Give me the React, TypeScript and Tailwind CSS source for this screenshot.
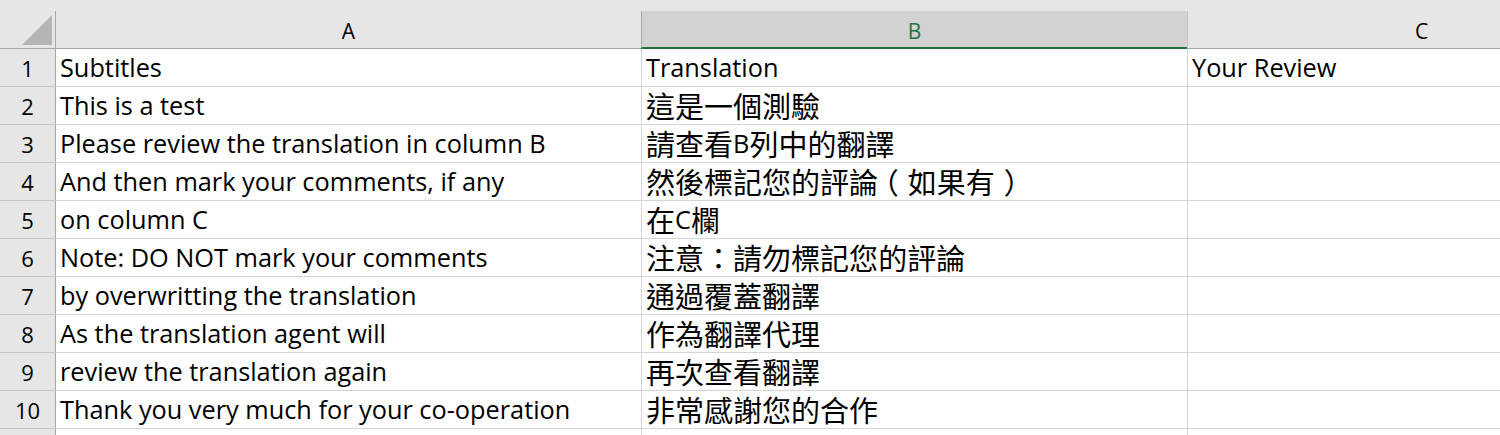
import React from "react";

const rows: [string, string, string][] = [
  ["Subtitles", "Translation", "Your Review"],
  ["This is a test", "這是一個測驗", ""],
  ["Please review the translation in column B", "請查看B列中的翻譯", ""],
  ["And then mark your comments, if any", "然後標記您的評論（如果有）", ""],
  ["on column C", "在C欄", ""],
  ["Note: DO NOT mark your comments", "注意：請勿標記您的評論", ""],
  ["by overwritting the translation", "通過覆蓋翻譯", ""],
  ["As the translation agent will", "作為翻譯代理", ""],
  ["review the translation again", "再次查看翻譯", ""],
  ["Thank you very much for your co-operation", "非常感謝您的合作", ""],
];

function Cjk({ text }: { text: string }) {
  const chars = Array.from(text);
  return (
    <span className="text-[29px] [font-family:'Noto_Sans_CJK_TC','Noto_Sans_CJK_SC',sans-serif]">
      {chars.map((c, i) =>
        c === "（" ? (
          <span key={i} className="pl-[6px] pr-[9px] [font-feature-settings:'halt']">{c}</span>
        ) : c === "）" ? (
          <span key={i} className="pl-[9px] pr-[6px] [font-feature-settings:'halt']">{c}</span>
        ) : (
          <React.Fragment key={i}>{c}</React.Fragment>
        )
      )}
    </span>
  );
}

function Mixed({ text }: { text: string }) {
  const parts = text.split(/([\u3000-\u9fff\uff00-\uffef]+)/).filter((p) => p.length > 0);
  return (
    <>
      {parts.map((p, i) =>
        /[\u3000-\u9fff\uff00-\uffef]/.test(p) ? <Cjk key={i} text={p} /> : <span key={i}>{p}</span>
      )}
    </>
  );
}

export default function App() {
  return (
    <div className="w-[1500px] h-[435px] overflow-hidden bg-white [font-family:'Open_Sans','Noto_Sans_CJK_TC',sans-serif] text-black">
      {/* top strip */}
      <div className="h-[11px] w-[1700px] bg-[#e6e6e6]" />
      {/* column header row */}
      <div className="flex h-[38px] w-[1700px] bg-[#e6e6e6]">
        <div className="flex h-[38px] w-[56px] shrink-0 items-end justify-end border-r border-b border-r-[#a8a8a8] border-b-[#a8a8a8] pr-[3px] pb-[3px]">
          <svg width="30" height="30" viewBox="0 0 30 30">
            <polygon points="0,30 30,30 30,0" fill="#b5b5b5" />
          </svg>
        </div>
        <div className="flex h-[38px] w-[585px] shrink-0 items-center justify-center border-b border-b-[#a8a8a8] pt-[5px] text-[21px]">
          A
        </div>
        <div className="flex h-[38px] w-[546px] shrink-0 items-center justify-center border-l-[1px] border-b-[2px] border-l-[#a8a8a8] border-b-[#1e7145] bg-[#d2d2d2] pt-[6px] text-[21px] text-[#217346]">
          B
        </div>
        <div className="flex h-[38px] w-[468px] shrink-0 items-center justify-center border-l border-b border-l-[#c4c4c4] border-b-[#a8a8a8] pt-[5px] text-[21px]">
          C
        </div>
      </div>
      {/* data rows */}
      {rows.map((r, i) => (
        <div key={i} className="flex h-[38px] w-[1700px]">
          <div className="flex h-[38px] w-[56px] shrink-0 items-center justify-center border-r border-b border-r-[#a8a8a8] border-b-[#c6c6c6] bg-[#e6e6e6] pt-[2px] text-[22px]">
            {i + 1}
          </div>
          <div className="flex h-[38px] w-[586px] shrink-0 items-center whitespace-nowrap border-r border-b border-[#d4d4d4] pl-[4px] pt-[1px] text-[25.3px]">
            {r[0]}
          </div>
          <div className="flex h-[38px] w-[546px] shrink-0 items-center whitespace-nowrap border-r border-b border-[#d4d4d4] pl-[4px] pt-[1px] text-[25.3px]">
            <Mixed text={r[1]} />
          </div>
          <div className="flex h-[38px] w-[468px] shrink-0 items-center whitespace-nowrap border-b border-[#d4d4d4] pl-[4px] pt-[1px] text-[25.3px]">
            {r[2]}
          </div>
        </div>
      ))}
      {/* partial row 11 */}
      <div className="flex h-[38px] w-[1700px]">
        <div className="h-[38px] w-[56px] shrink-0 border-r border-r-[#a8a8a8] bg-[#e6e6e6]" />
        <div className="h-[38px] w-[586px] shrink-0 border-r border-[#d4d4d4]" />
        <div className="h-[38px] w-[546px] shrink-0 border-r border-[#d4d4d4]" />
        <div className="h-[38px] w-[468px] shrink-0" />
      </div>
    </div>
  );
}
